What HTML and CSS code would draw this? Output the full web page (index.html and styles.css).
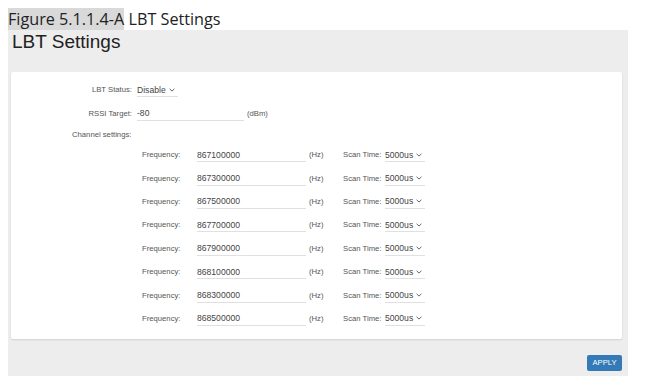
FILE: index.html
```html
<!DOCTYPE html>
<html lang="en">
<head>
  <meta charset="UTF-8" />
  <title>LBT Settings</title>
  <link rel="stylesheet" href="styles.css">
</head>
<body>

<p class="caption"><span class="caption__mark">Figure 5.1.1.4-A</span> LBT Settings</p>

<main class="panel">
  <h1 class="panel__title">LBT Settings</h1>

  <section class="card">
    <div class="field">
      <span class="field__label">LBT Status:</span>
      <span class="select">Disable <svg class="select__arrow" viewBox="0 0 6 4"><path d="M0.6 0.8 3 3.1 5.4 0.8" /></svg></span>
    </div>
    <div class="field">
      <span class="field__label">RSSI Target:</span>
      <span class="input input--rssi">-80</span>
      <span class="unit">(dBm)</span>
    </div>
    <div class="field field--group">
      <span class="field__label field__label--left">Channel settings:</span>
    </div>

    <div class="channels">
      <div class="channel">
        <span class="channel__label">Frequency:</span>
        <span class="input input--freq">867100000</span>
        <span class="unit">(Hz)</span>
        <span class="channel__label channel__label--scan">Scan Time:</span>
        <span class="select">5000us <svg class="select__arrow" viewBox="0 0 6 4"><path d="M0.6 0.8 3 3.1 5.4 0.8" /></svg></span>
      </div>
      <div class="channel">
        <span class="channel__label">Frequency:</span>
        <span class="input input--freq">867300000</span>
        <span class="unit">(Hz)</span>
        <span class="channel__label channel__label--scan">Scan Time:</span>
        <span class="select">5000us <svg class="select__arrow" viewBox="0 0 6 4"><path d="M0.6 0.8 3 3.1 5.4 0.8" /></svg></span>
      </div>
      <div class="channel">
        <span class="channel__label">Frequency:</span>
        <span class="input input--freq">867500000</span>
        <span class="unit">(Hz)</span>
        <span class="channel__label channel__label--scan">Scan Time:</span>
        <span class="select">5000us <svg class="select__arrow" viewBox="0 0 6 4"><path d="M0.6 0.8 3 3.1 5.4 0.8" /></svg></span>
      </div>
      <div class="channel">
        <span class="channel__label">Frequency:</span>
        <span class="input input--freq">867700000</span>
        <span class="unit">(Hz)</span>
        <span class="channel__label channel__label--scan">Scan Time:</span>
        <span class="select">5000us <svg class="select__arrow" viewBox="0 0 6 4"><path d="M0.6 0.8 3 3.1 5.4 0.8" /></svg></span>
      </div>
      <div class="channel">
        <span class="channel__label">Frequency:</span>
        <span class="input input--freq">867900000</span>
        <span class="unit">(Hz)</span>
        <span class="channel__label channel__label--scan">Scan Time:</span>
        <span class="select">5000us <svg class="select__arrow" viewBox="0 0 6 4"><path d="M0.6 0.8 3 3.1 5.4 0.8" /></svg></span>
      </div>
      <div class="channel">
        <span class="channel__label">Frequency:</span>
        <span class="input input--freq">868100000</span>
        <span class="unit">(Hz)</span>
        <span class="channel__label channel__label--scan">Scan Time:</span>
        <span class="select">5000us <svg class="select__arrow" viewBox="0 0 6 4"><path d="M0.6 0.8 3 3.1 5.4 0.8" /></svg></span>
      </div>
      <div class="channel">
        <span class="channel__label">Frequency:</span>
        <span class="input input--freq">868300000</span>
        <span class="unit">(Hz)</span>
        <span class="channel__label channel__label--scan">Scan Time:</span>
        <span class="select">5000us <svg class="select__arrow" viewBox="0 0 6 4"><path d="M0.6 0.8 3 3.1 5.4 0.8" /></svg></span>
      </div>
      <div class="channel">
        <span class="channel__label">Frequency:</span>
        <span class="input input--freq">868500000</span>
        <span class="unit">(Hz)</span>
        <span class="channel__label channel__label--scan">Scan Time:</span>
        <span class="select">5000us <svg class="select__arrow" viewBox="0 0 6 4"><path d="M0.6 0.8 3 3.1 5.4 0.8" /></svg></span>
      </div>
    </div>
  </section>

  <div class="actions">
    <button class="button">APPLY</button>
  </div>
</main>

</body>
</html>
```

FILE: styles.css
```css
* {
  box-sizing: border-box;
}
body {
  margin: 0;
  background: #fff;
  font-family: 'Liberation Sans', Arial, sans-serif;
  color: #333;
}

.caption {
  margin: 0;
  padding: 8px 0 0 8px;
  height: 30px;
  font-family: 'Open Sans', 'Noto Sans', sans-serif;
  font-size: 16.2px;
  line-height: 22px;
  color: #222;
}
.caption__mark {
  display: inline-block;
  background: #d9d9d9;
}

.panel {
  display: flex;
  flex-direction: column;
  width: 620px;
  height: 346px;
  margin-left: 8px;
  background: #ededed;
}
.panel__title {
  margin: 0;
  padding: 1px 0 0 4px;
  height: 42px;
  font-size: 19px;
  font-weight: normal;
  line-height: 22px;
  color: #222;
}

.card {
  width: 611px;
  height: 267px;
  margin-left: 3px;
  padding-top: 6px;
  background: #fff;
  border-radius: 2px;
  box-shadow: 0 1px 2px rgba(0, 0, 0, 0.12);
}

.field {
  display: flex;
  align-items: center;
  height: 23.5px;
}
.field--group {
  height: 18px;
}
.field__label {
  width: 126px;
  padding-right: 5px;
  text-align: right;
  font-size: 7.7px;
  color: #555;
}
.field__label--left {
  padding-left: 61px;
  text-align: left;
  width: auto;
}

.channel {
  display: flex;
  align-items: center;
  height: 23.4px;
  padding-left: 131px;
}
.channel__label {
  width: 55px;
  font-size: 7.7px;
  color: #555;
}
.channel__label--scan {
  width: 42px;
}

.input,
.select {
  display: flex;
  align-items: center;
  height: 15px;
  padding-top: 1px;
  border-bottom: 1px solid #e0e0e0;
  font-size: 8.6px;
  color: #444;
}
.input--rssi {
  width: 107px;
}
.input--freq {
  width: 109px;
}
.select {
  gap: 3px;
  padding-right: 3px;
}
.select__arrow {
  width: 6px;
  height: 4px;
  fill: none;
  stroke: #555;
  stroke-width: 0.9;
}

.unit {
  margin-left: 3px;
  width: 34px;
  font-size: 7.7px;
  color: #555;
}

.actions {
  display: flex;
  justify-content: flex-end;
  padding: 16px 6px 0 0;
}
.button {
  width: 35px;
  height: 16px;
  padding: 0;
  border: none;
  border-radius: 2px;
  background: #337ab7;
  color: #fff;
  font-family: 'Liberation Sans', Arial, sans-serif;
  font-size: 7.7px;
  line-height: 16px;
}
```
